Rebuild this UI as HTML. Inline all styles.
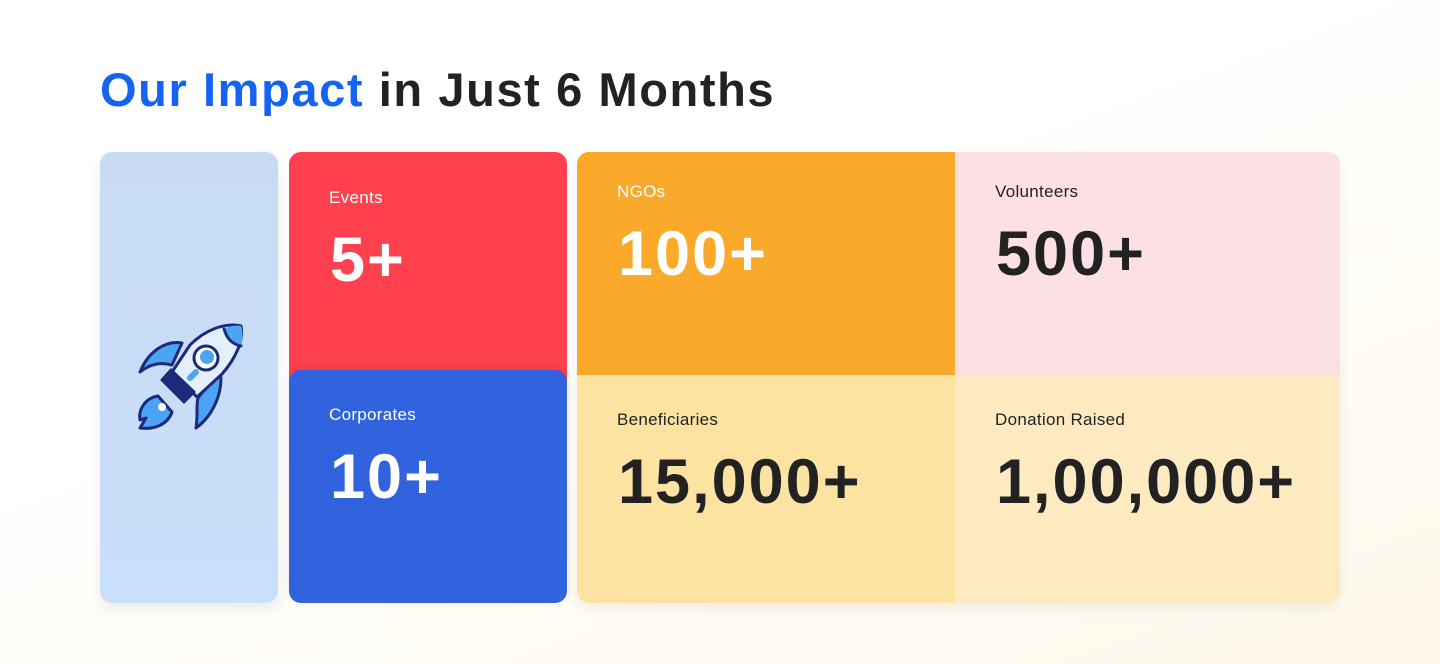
<!DOCTYPE html>
<html><head><meta charset="utf-8"><style>
*{margin:0;padding:0;box-sizing:border-box}
body{width:1440px;height:664px;overflow:hidden;background:linear-gradient(160deg,#fff 40%,#fef8ea 100%);font-family:"Liberation Sans",sans-serif;position:relative}
h1{position:absolute;left:100px;top:62px;font-size:47px;font-weight:bold;color:#222;letter-spacing:1.6px}
h1 span{color:#1463f3}
.c{position:absolute;overflow:hidden}
.l{position:absolute;font-size:17px;letter-spacing:0.3px}
.n{position:absolute;font-size:63px;font-weight:bold;letter-spacing:2px}
</style></head><body>
<h1><span>Our Impact</span> in Just 6 Months</h1>
<div class="c" style="left:100px;top:152px;width:178px;height:451px;background:linear-gradient(180deg,#c9dbf4,#cadffc);border-radius:12px;box-shadow:0 6px 14px rgba(0,0,0,0.08)"></div>
<svg style="position:absolute;left:100px;top:300px" width="180" height="150" viewBox="100 300 180 150">
<g stroke="#1c2a78" stroke-width="3" stroke-linejoin="round" stroke-linecap="round">
<path d="M182,343 C165,340 148,352 140,372 C150,364 160,362 172,365 Z" fill="#4aa3f5"/>
<path d="M220,370 C224,390 214,415 196,428 C198,415 196,405 198,398 Z" fill="#4aa3f5"/>
<path d="M158,396 C145,398 138,410 140,420 L146,418 L140,428 C155,430 168,424 172,412 Z" fill="#4aa3f5"/>
<path d="M241,326 C225,322 205,330 190,345 L172,372 L197,397 L222,374 C236,358 244,340 241,326 Z" fill="#e3f0fc"/>
<path d="M162,380 L184,402 L194,392 L171,370 Z" fill="#1c2a78"/>
<path d="M224,329 C227,339 232,344 241,346 C243,338 243,330 241,326 C235,325 229,326 224,329 Z" fill="#4aa3f5" stroke="none"/>
<path d="M224,329 C227,339 232,344 241,346" fill="none"/>
<circle cx="206" cy="358" r="12" fill="#fff"/>
</g>
<circle cx="207" cy="357" r="7" fill="#4aa3f5"/>
<circle cx="162" cy="407" r="4" fill="#fff"/>
<path d="M190,378 L196,372" stroke="#4aa3f5" stroke-width="6" stroke-linecap="round"/>
</svg>
<div class="c" style="left:289px;top:152px;width:278px;height:240px;background:#ff414f;border-radius:12px">
<div class="l" style="left:40px;top:36px;color:#fff">Events</div>
<div class="n" style="left:41px;top:72px;color:#fff">5+</div>
</div>
<div class="c" style="left:289px;top:370px;width:278px;height:233px;background:#3063dd;border-radius:12px;box-shadow:0 -4px 10px rgba(0,0,0,0.08)">
<div class="l" style="left:40px;top:35px;color:#fff">Corporates</div>
<div class="n" style="left:41px;top:71px;color:#fff">10+</div>
</div>
<div class="c" style="left:577px;top:152px;width:763px;height:451px;border-radius:12px;box-shadow:0 6px 14px rgba(0,0,0,0.06)">
<div class="c" style="left:0;top:0;width:378px;height:223px;background:#fba92b">
<div class="l" style="left:40px;top:30px;color:#fff">NGOs</div>
<div class="n" style="left:41px;top:66px;color:#fff">100+</div></div>
<div class="c" style="left:378px;top:0;width:385px;height:223px;background:#fde0e4">
<div class="l" style="left:40px;top:30px;color:#222">Volunteers</div>
<div class="n" style="left:41px;top:66px;color:#222">500+</div></div>
<div class="c" style="left:0;top:223px;width:378px;height:228px;background:#fde3a1">
<div class="l" style="left:40px;top:35px;color:#222">Beneficiaries</div>
<div class="n" style="left:41px;top:71px;color:#222">15,000+</div></div>
<div class="c" style="left:378px;top:223px;width:385px;height:228px;background:#fdeac0">
<div class="l" style="left:40px;top:35px;color:#222">Donation Raised</div>
<div class="n" style="left:41px;top:71px;color:#222">1,00,000+</div></div>
</div>
</body></html>
